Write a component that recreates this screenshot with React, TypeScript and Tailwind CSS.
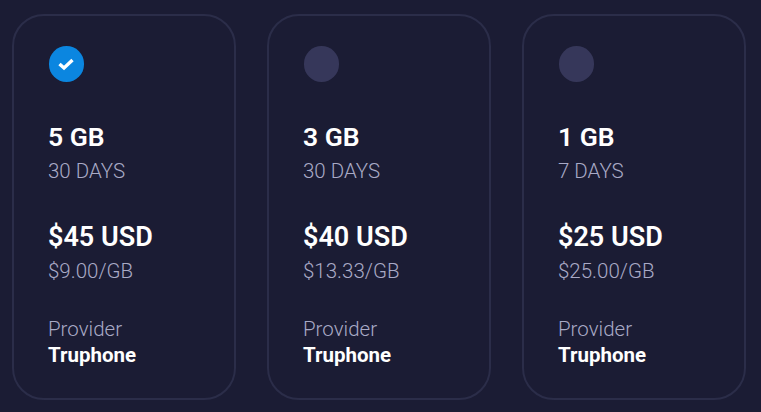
import React from "react";

const plans = [
  { gb: "5 GB", days: "30 DAYS", price: "$45 USD", per: "$9.00/GB", selected: true },
  { gb: "3 GB", days: "30 DAYS", price: "$40 USD", per: "$13.33/GB", selected: false },
  { gb: "1 GB", days: "7 DAYS", price: "$25 USD", per: "$25.00/GB", selected: false },
];

function Card({ plan }: { plan: (typeof plans)[number] }) {
  return (
    <div className="flex h-[386px] w-[224.5px] shrink-0 flex-col rounded-[32px] border-2 border-[#2b2d49] pl-[35px] pt-[30px]">
      {plan.selected ? (
        <div className="flex h-[35.5px] w-[35.5px] items-center justify-center rounded-full bg-[#0b86e0]">
          <svg width="16" height="14" viewBox="0 0 16 14" fill="none">
            <path d="M1.5 7 L6 11 L14.5 3" stroke="#fff" strokeWidth="3.4" />
          </svg>
        </div>
      ) : (
        <div className="h-[35.5px] w-[35.5px] rounded-full bg-[#36375a]" />
      )}
      <div className="-ml-[0.5px] mt-[40.5px] text-[26.5px] font-semibold leading-[30px] text-white">{plan.gb}</div>
      <div className="-ml-[0.5px] mt-[6px] text-[20.5px] font-light leading-[26px] text-[#a9aac6]">{plan.days}</div>
      <div className="-ml-[0.5px] mt-[38px] text-[27px] font-semibold leading-[30px] text-white">{plan.price}</div>
      <div className="-ml-[0.5px] mt-[6px] text-[20.5px] font-light leading-[26px] text-[#a9aac6]">{plan.per}</div>
      <div className="-ml-[0.5px] mt-[32px] text-[20.5px] font-light leading-[26px] text-[#a9aac6]">Provider</div>
      <div className="-ml-[0.5px] text-[20.5px] font-bold leading-[26px] text-white">Truphone</div>
    </div>
  );
}

export default function App() {
  return (
    <div className="flex h-[412px] w-[761px] gap-[30.5px] overflow-hidden bg-[#1b1c34] pl-[11.5px] pt-[14px] font-['Roboto',sans-serif]">
      {plans.map((p) => (
        <Card key={p.gb} plan={p} />
      ))}
    </div>
  );
}
